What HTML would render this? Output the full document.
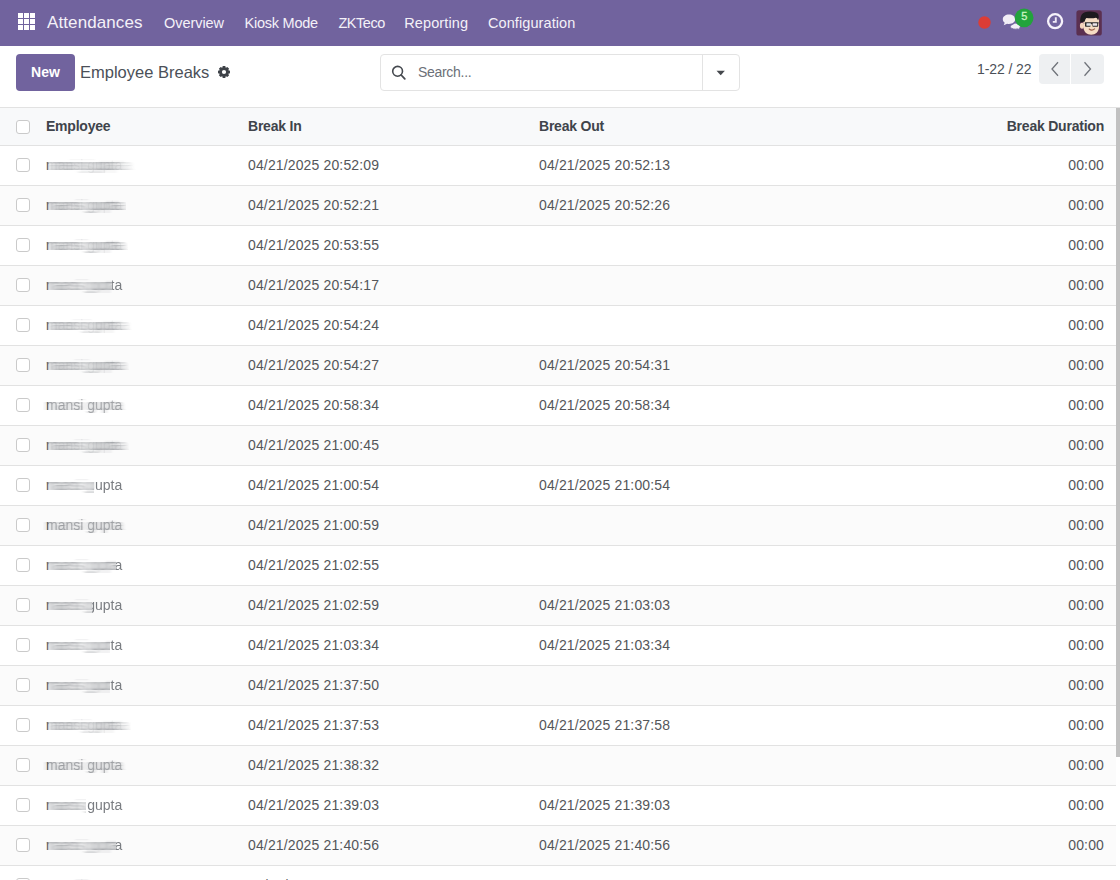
<!DOCTYPE html>
<html><head><meta charset="utf-8">
<style>
*{box-sizing:border-box;margin:0;padding:0}
html,body{width:1120px;height:880px;overflow:hidden;background:#fff;font-family:"Liberation Sans",sans-serif;color:#374151;font-size:14px}
.nav{position:absolute;left:0;top:0;width:1120px;height:46px;background:#71639e;color:#f4f1f8}
.nav .t{position:absolute;top:0;line-height:46px;white-space:nowrap}
.grid{position:absolute;left:17.8px;top:13.4px;width:17px;height:17px}
.grid i{position:absolute;width:5px;height:5px;background:#fff}
.brand{font-size:17px;left:47px;letter-spacing:.1px}
.mi{font-size:14.5px;letter-spacing:-.05px}
.cp{position:absolute;left:0;top:46px;width:1120px;height:61px;background:#fff}
.btn-new{position:absolute;left:16px;top:8px;width:59px;height:37px;background:#71639e;border-radius:4px;color:#fff;font-weight:bold;font-size:14px;line-height:37px;text-align:center}
.bc{position:absolute;left:80px;top:15px;font-size:16.5px;color:#4b5058;line-height:22px;white-space:nowrap}
.search{position:absolute;left:380px;top:8px;width:360px;height:37px;border:1px solid #e3e3e3;border-radius:4px}
.search .div{position:absolute;left:321px;top:0;width:1px;height:35px;background:#e3e3e3}
.search .ph{position:absolute;left:37px;top:0;line-height:35px;color:#6c7078;font-size:14px;letter-spacing:-.3px}
.pager{position:absolute;left:977px;top:13px;line-height:20px;font-size:14px;color:#4b5058;letter-spacing:-.1px}
.pbtn{position:absolute;top:8px;width:31px;height:30px;background:#eef0f2}
.tbl{position:absolute;left:0;top:107px;width:1116px}
.row{position:absolute;left:0;width:1116px;height:40px;border-top:1px solid #e2e2e2}
.hdr{background:#f8f9fa;height:38px;font-weight:bold;color:#40444b;letter-spacing:-.22px}
.c{position:absolute;white-space:nowrap;line-height:20px}
.d{color:#54565a;letter-spacing:.14px}
.cb{position:absolute;left:16px;width:14px;height:14px;border:1px solid #cacaca;border-radius:3px;background:#fff}
.emp{position:absolute;left:46px;top:9px;width:100px;height:20px}
.emp .bl{position:absolute;left:0;top:0;color:#85888d;white-space:nowrap;line-height:20px}
.emp .cr{position:absolute;left:0;top:0;color:#7a7d82;white-space:nowrap;line-height:20px}
.scroll{position:absolute;left:1116px;top:108px;width:4px;height:649px;background:#c1c1c1}
</style></head><body>
<svg width="0" height="0" style="position:absolute"><filter id="mb3" x="-5%" y="-20%" width="140%" height="140%" filterUnits="objectBoundingBox"><feConvolveMatrix order="7 1" kernelMatrix="1 1 1 1 1 1 1" divisor="7" targetX="3" targetY="0" edgeMode="none" preserveAlpha="false"/><feGaussianBlur stdDeviation="0.8 0.4"/><feComponentTransfer><feFuncA type="linear" slope="1.1"/></feComponentTransfer></filter><filter id="mb6" x="-5%" y="-20%" width="140%" height="140%" filterUnits="objectBoundingBox"><feConvolveMatrix order="13 1" kernelMatrix="1 1 1 1 1 1 1 1 1 1 1 1 1" divisor="13" targetX="6" targetY="0" edgeMode="none" preserveAlpha="false"/><feGaussianBlur stdDeviation="0.8 0.4"/><feComponentTransfer><feFuncA type="linear" slope="1.1"/></feComponentTransfer></filter><filter id="mb7" x="-5%" y="-20%" width="140%" height="140%" filterUnits="objectBoundingBox"><feConvolveMatrix order="15 1" kernelMatrix="1 1 1 1 1 1 1 1 1 1 1 1 1 1 1" divisor="15" targetX="7" targetY="0" edgeMode="none" preserveAlpha="false"/><feGaussianBlur stdDeviation="0.8 0.4"/><feComponentTransfer><feFuncA type="linear" slope="1.1"/></feComponentTransfer></filter><filter id="mb9" x="-5%" y="-20%" width="140%" height="140%" filterUnits="objectBoundingBox"><feConvolveMatrix order="19 1" kernelMatrix="1 1 1 1 1 1 1 1 1 1 1 1 1 1 1 1 1 1 1" divisor="19" targetX="9" targetY="0" edgeMode="none" preserveAlpha="false"/><feGaussianBlur stdDeviation="0.8 0.4"/><feComponentTransfer><feFuncA type="linear" slope="1.1"/></feComponentTransfer></filter><filter id="mb12" x="-5%" y="-20%" width="140%" height="140%" filterUnits="objectBoundingBox"><feConvolveMatrix order="25 1" kernelMatrix="1 1 1 1 1 1 1 1 1 1 1 1 1 1 1 1 1 1 1 1 1 1 1 1 1" divisor="25" targetX="12" targetY="0" edgeMode="none" preserveAlpha="false"/><feGaussianBlur stdDeviation="0.8 0.4"/><feComponentTransfer><feFuncA type="linear" slope="1.1"/></feComponentTransfer></filter></svg>
<div class="nav">
<div class="grid"><i style="left:0px;top:0px"></i><i style="left:6px;top:0px"></i><i style="left:12px;top:0px"></i><i style="left:0px;top:6px"></i><i style="left:6px;top:6px"></i><i style="left:12px;top:6px"></i><i style="left:0px;top:12px"></i><i style="left:6px;top:12px"></i><i style="left:12px;top:12px"></i></div>
<div class="t brand">Attendances</div>
<div class="t mi" style="left:164px">Overview</div>
<div class="t mi" style="left:244.6px;letter-spacing:-.25px">Kiosk Mode</div>
<div class="t mi" style="left:338.4px;letter-spacing:-.45px">ZKTeco</div>
<div class="t mi" style="left:404.3px;letter-spacing:.1px">Reporting</div>
<div class="t mi" style="left:487.9px;letter-spacing:.1px">Configuration</div>
<svg style="position:absolute;left:970px;top:0" width="150" height="46" viewBox="970 0 150 46">
 <circle cx="984.5" cy="22.5" r="6.2" fill="#dc3d36"/>
 <path d="M1009 14.6c-3.5 0-6.2 2.1-6.2 4.7 0 1.4.7 2.6 1.9 3.4l-1 2.6 3.4-1.6c.6.1 1.2.2 1.9.2 3.5 0 6.2-2.1 6.2-4.7s-2.7-4.6-6.2-4.6z" fill="#f1edf6"/>
 <path d="M1015.3 23.2c2.9 0 5.1 1.3 5.1 3.1 0 .8-.4 1.4-1 1.9l.8 1.6-2.6-.9c-.7.2-1.5.3-2.3.3-2.9 0-5.1-1.3-5.1-3" fill="#f1edf6" stroke="#71639e" stroke-width=".9"/>
 <circle cx="1024.1" cy="17.8" r="9.4" fill="#22a33c"/>
 <text x="1024.3" y="20.4" font-family="Liberation Sans" font-size="11" fill="#c9f3c2" text-anchor="middle" stroke="#c9f3c2" stroke-width=".3">5</text>
 <circle cx="1055.1" cy="21.2" r="7" fill="none" stroke="#f6f2fb" stroke-width="2.3"/>
 <path d="M1055.8 17.2v4.7h-3" fill="none" stroke="#efe9f7" stroke-width="1.9"/>
 <g transform="translate(1076.4 10.2)">
 <rect x="0" y="0" width="25.4" height="25.4" rx="2.6" fill="#5b3050"/>
 <path d="M7 9c0-2 2-3.2 6.5-3.2S22.6 7 22.6 10v6.5c0 5-3.5 8-7.8 8s-7.8-3-7.8-8z" fill="#f6dcc4"/>
 <ellipse cx="5.6" cy="15.6" rx="2.1" ry="3" fill="#f3d3bd"/>
 <path d="M4 12.6c-.5-3 0-6 1.2-8 1.5-2.3 4.5-3.2 8.5-3.2 4 0 7.2.8 8.2 2.8.6 1.4.5 3.3 0 5.5l-.4.3c-.4-1.5-1-2.3-2-2.5-2.5.6-6 .7-9.5.2-.9.8-1.4 2-1.6 3.6l-1 .2c-1 .2-2.4.4-3.4 1.1z" fill="#1d1a1e"/>
 <path d="M8.6 12h13.6v1.2h-.4v2.3c0 .7-.5 1.1-1.1 1.1h-3.6c-.7 0-1.1-.5-1.2-1.1l-.2-1.5h-1.2l-.2 1.5c-.1.6-.5 1.1-1.2 1.1h-3.4c-.7 0-1.1-.5-1.1-1.1v-2.3h-.4z" fill="#2b2a2c"/>
 <rect x="10" y="13" width="4.6" height="2.6" rx=".6" fill="#dfe2e6"/>
 <rect x="16.2" y="13" width="4.6" height="2.6" rx=".6" fill="#f0e6ec"/>
 <path d="M12.8 18.8c1.6 1.3 3.8 1.3 5.4-.2" fill="none" stroke="#9a5d48" stroke-width="1.1" stroke-linecap="round"/>
 </g>
</svg>
</div>
<div class="cp">
<div class="btn-new">New</div>
<div class="bc">Employee Breaks</div>
<svg style="position:absolute;left:217px;top:18.9px" width="14" height="14" viewBox="0 0 14 14"><path fill="#3e4248" fill-rule="evenodd" d="M5.34 2.60 L5.73 1.03 L8.27 1.03 L8.66 2.60 L8.75 2.64 L8.80 2.66 L8.85 2.68 L8.94 2.72 L10.32 1.88 L12.12 3.68 L11.28 5.06 L11.32 5.15 L11.34 5.20 L11.36 5.25 L11.40 5.34 L12.97 5.73 L12.97 8.27 L11.40 8.66 L11.36 8.75 L11.34 8.80 L11.32 8.85 L11.28 8.94 L12.12 10.32 L10.32 12.12 L8.94 11.28 L8.85 11.32 L8.80 11.34 L8.75 11.36 L8.66 11.40 L8.27 12.97 L5.73 12.97 L5.34 11.40 L5.25 11.36 L5.20 11.34 L5.15 11.32 L5.06 11.28 L3.68 12.12 L1.88 10.32 L2.72 8.94 L2.68 8.85 L2.66 8.80 L2.64 8.75 L2.60 8.66 L1.03 8.27 L1.03 5.73 L2.60 5.34 L2.64 5.25 L2.66 5.20 L2.68 5.15 L2.72 5.06 L1.88 3.68 L3.68 1.88 L5.06 2.72 L5.15 2.68 L5.20 2.66 L5.25 2.64Z M9.10 7 A2.1 2.1 0 1 0 4.90 7 A2.1 2.1 0 1 0 9.10 7Z"/></svg>
<div class="search"><div class="ph">Search...</div><div class="div"></div>
 <svg style="position:absolute;left:8.6px;top:9.4px" width="18" height="18" viewBox="0 0 18 18">
  <circle cx="7.6" cy="7.3" r="4.9" fill="none" stroke="#45494f" stroke-width="1.6"/>
  <path d="M11.2 11l3.6 3.8" stroke="#45494f" stroke-width="1.8" stroke-linecap="round"/>
 </svg>
 <svg style="position:absolute;left:335px;top:14.6px" width="10" height="6" viewBox="0 0 10 6"><path d="M0.5 0.8h8.4L4.7 5.3z" fill="#45484d"/></svg>
</div>
<div class="pager">1-22 / 22</div>
<div class="pbtn" style="left:1039px;border-radius:4px 0 0 4px"></div>
<div class="pbtn" style="left:1071px;width:32.5px;border-radius:0 4px 4px 0"></div>
<svg style="position:absolute;left:1039px;top:8px" width="65" height="30" viewBox="0 0 65 30">
 <path d="M19 8.2l-6 6.8 6 6.8" fill="none" stroke="#6f737a" stroke-width="1.3"/>
 <path d="M45.5 8.2l6 6.8-6 6.8" fill="none" stroke="#6f737a" stroke-width="1.3"/>
</svg>
</div>
<div class="tbl">
<div class="row hdr" style="top:0"><div class="cb" style="top:12px"></div><div class="c" style="left:46px;top:8px">Employee</div><div class="c" style="left:248px;top:8px">Break In</div><div class="c" style="left:539px;top:8px">Break Out</div><div class="c" style="right:12px;top:8px">Break Duration</div></div>
<div class="row" style="top:38px;background:#fff"><div class="cb" style="top:12px"></div><div class="emp"><div class="cr" style="opacity:.1">mansi gupta</div><div class="bl" style="filter:url(#mb12);clip-path:inset(-5px calc(100% - 92px) -5px 0.5px)">mansi gupta</div><div class="cr" style="clip-path:inset(-5px calc(100% - 2.6px) -5px -5px);color:#5d6066">mansi gupta</div></div><div class="c d" style="left:248px;top:9px">04/21/2025 20:52:09</div><div class="c d" style="left:539px;top:9px">04/21/2025 20:52:13</div><div class="c d" style="right:12px;top:9px">00:00</div></div>
<div class="row" style="top:78px;background:#fbfbfb"><div class="cb" style="top:12px"></div><div class="emp"><div class="cr" style="opacity:.1">mansi gupta</div><div class="bl" style="filter:url(#mb6);clip-path:inset(-5px calc(100% - 80px) -5px 0.5px)">mansi gupta</div><div class="cr" style="clip-path:inset(-5px calc(100% - 2.6px) -5px -5px);color:#5d6066">mansi gupta</div></div><div class="c d" style="left:248px;top:9px">04/21/2025 20:52:21</div><div class="c d" style="left:539px;top:9px">04/21/2025 20:52:26</div><div class="c d" style="right:12px;top:9px">00:00</div></div>
<div class="row" style="top:118px;background:#fff"><div class="cb" style="top:12px"></div><div class="emp"><div class="cr" style="opacity:.1">mansi gupta</div><div class="bl" style="filter:url(#mb6);clip-path:inset(-5px calc(100% - 82px) -5px 0.5px)">mansi gupta</div><div class="cr" style="clip-path:inset(-5px calc(100% - 2.6px) -5px -5px);color:#5d6066">mansi gupta</div></div><div class="c d" style="left:248px;top:9px">04/21/2025 20:53:55</div><div class="c d" style="right:12px;top:9px">00:00</div></div>
<div class="row" style="top:158px;background:#fbfbfb"><div class="cb" style="top:12px"></div><div class="emp"><div class="bl" style="filter:url(#mb6);clip-path:inset(-5px calc(100% - 66px) -5px 0.5px)">mansi gupta</div><div class="cr" style="clip-path:inset(-5px calc(100% - 2.6px) -5px -5px);color:#5d6066">mansi gupta</div><div class="cr" style="clip-path:inset(-5px -5px -5px 66px);filter:blur(.25px)">mansi gupta</div></div><div class="c d" style="left:248px;top:9px">04/21/2025 20:54:17</div><div class="c d" style="right:12px;top:9px">00:00</div></div>
<div class="row" style="top:198px;background:#fff"><div class="cb" style="top:12px"></div><div class="emp"><div class="cr" style="opacity:.1">mansi gupta</div><div class="bl" style="filter:url(#mb9);clip-path:inset(-5px calc(100% - 86px) -5px 0.5px)">mansi gupta</div><div class="cr" style="clip-path:inset(-5px calc(100% - 2.6px) -5px -5px);color:#5d6066">mansi gupta</div></div><div class="c d" style="left:248px;top:9px">04/21/2025 20:54:24</div><div class="c d" style="right:12px;top:9px">00:00</div></div>
<div class="row" style="top:238px;background:#fbfbfb"><div class="cb" style="top:12px"></div><div class="emp"><div class="cr" style="opacity:.1">mansi gupta</div><div class="bl" style="filter:url(#mb7);clip-path:inset(-5px calc(100% - 83px) -5px 0.5px)">mansi gupta</div><div class="cr" style="clip-path:inset(-5px calc(100% - 2.6px) -5px -5px);color:#5d6066">mansi gupta</div></div><div class="c d" style="left:248px;top:9px">04/21/2025 20:54:27</div><div class="c d" style="left:539px;top:9px">04/21/2025 20:54:31</div><div class="c d" style="right:12px;top:9px">00:00</div></div>
<div class="row" style="top:278px;background:#fff"><div class="cb" style="top:12px"></div><div class="emp"><div class="bl" style="filter:url(#mb3);opacity:.6">mansi gupta</div><div class="cr" style="opacity:.55">mansi gupta</div><div class="cr" style="clip-path:inset(-5px calc(100% - 2.6px) -5px -5px);color:#5d6066">mansi gupta</div></div><div class="c d" style="left:248px;top:9px">04/21/2025 20:58:34</div><div class="c d" style="left:539px;top:9px">04/21/2025 20:58:34</div><div class="c d" style="right:12px;top:9px">00:00</div></div>
<div class="row" style="top:318px;background:#fbfbfb"><div class="cb" style="top:12px"></div><div class="emp"><div class="cr" style="opacity:.1">mansi gupta</div><div class="bl" style="filter:url(#mb7);clip-path:inset(-5px calc(100% - 83px) -5px 0.5px)">mansi gupta</div><div class="cr" style="clip-path:inset(-5px calc(100% - 2.6px) -5px -5px);color:#5d6066">mansi gupta</div></div><div class="c d" style="left:248px;top:9px">04/21/2025 21:00:45</div><div class="c d" style="right:12px;top:9px">00:00</div></div>
<div class="row" style="top:358px;background:#fff"><div class="cb" style="top:12px"></div><div class="emp"><div class="bl" style="filter:url(#mb6);clip-path:inset(-5px calc(100% - 48px) -5px 0.5px)">mansi gupta</div><div class="cr" style="clip-path:inset(-5px calc(100% - 2.6px) -5px -5px);color:#5d6066">mansi gupta</div><div class="cr" style="clip-path:inset(-5px -5px -5px 48px);filter:blur(.25px)">mansi gupta</div></div><div class="c d" style="left:248px;top:9px">04/21/2025 21:00:54</div><div class="c d" style="left:539px;top:9px">04/21/2025 21:00:54</div><div class="c d" style="right:12px;top:9px">00:00</div></div>
<div class="row" style="top:398px;background:#fbfbfb"><div class="cb" style="top:12px"></div><div class="emp"><div class="bl" style="filter:url(#mb3);opacity:.6">mansi gupta</div><div class="cr" style="opacity:.55">mansi gupta</div><div class="cr" style="clip-path:inset(-5px calc(100% - 2.6px) -5px -5px);color:#5d6066">mansi gupta</div></div><div class="c d" style="left:248px;top:9px">04/21/2025 21:00:59</div><div class="c d" style="right:12px;top:9px">00:00</div></div>
<div class="row" style="top:438px;background:#fff"><div class="cb" style="top:12px"></div><div class="emp"><div class="bl" style="filter:url(#mb6);clip-path:inset(-5px calc(100% - 70px) -5px 0.5px)">mansi gupta</div><div class="cr" style="clip-path:inset(-5px calc(100% - 2.6px) -5px -5px);color:#5d6066">mansi gupta</div><div class="cr" style="clip-path:inset(-5px -5px -5px 70px);filter:blur(.25px)">mansi gupta</div></div><div class="c d" style="left:248px;top:9px">04/21/2025 21:02:55</div><div class="c d" style="right:12px;top:9px">00:00</div></div>
<div class="row" style="top:478px;background:#fbfbfb"><div class="cb" style="top:12px"></div><div class="emp"><div class="bl" style="filter:url(#mb6);clip-path:inset(-5px calc(100% - 46px) -5px 0.5px)">mansi gupta</div><div class="cr" style="clip-path:inset(-5px calc(100% - 2.6px) -5px -5px);color:#5d6066">mansi gupta</div><div class="cr" style="clip-path:inset(-5px -5px -5px 46px);filter:blur(.25px)">mansi gupta</div></div><div class="c d" style="left:248px;top:9px">04/21/2025 21:02:59</div><div class="c d" style="left:539px;top:9px">04/21/2025 21:03:03</div><div class="c d" style="right:12px;top:9px">00:00</div></div>
<div class="row" style="top:518px;background:#fff"><div class="cb" style="top:12px"></div><div class="emp"><div class="bl" style="filter:url(#mb6);clip-path:inset(-5px calc(100% - 64px) -5px 0.5px)">mansi gupta</div><div class="cr" style="clip-path:inset(-5px calc(100% - 2.6px) -5px -5px);color:#5d6066">mansi gupta</div><div class="cr" style="clip-path:inset(-5px -5px -5px 64px);filter:blur(.25px)">mansi gupta</div></div><div class="c d" style="left:248px;top:9px">04/21/2025 21:03:34</div><div class="c d" style="left:539px;top:9px">04/21/2025 21:03:34</div><div class="c d" style="right:12px;top:9px">00:00</div></div>
<div class="row" style="top:558px;background:#fbfbfb"><div class="cb" style="top:12px"></div><div class="emp"><div class="bl" style="filter:url(#mb6);clip-path:inset(-5px calc(100% - 64px) -5px 0.5px)">mansi gupta</div><div class="cr" style="clip-path:inset(-5px calc(100% - 2.6px) -5px -5px);color:#5d6066">mansi gupta</div><div class="cr" style="clip-path:inset(-5px -5px -5px 64px);filter:blur(.25px)">mansi gupta</div></div><div class="c d" style="left:248px;top:9px">04/21/2025 21:37:50</div><div class="c d" style="right:12px;top:9px">00:00</div></div>
<div class="row" style="top:598px;background:#fff"><div class="cb" style="top:12px"></div><div class="emp"><div class="cr" style="opacity:.1">mansi gupta</div><div class="bl" style="filter:url(#mb9);clip-path:inset(-5px calc(100% - 85px) -5px 0.5px)">mansi gupta</div><div class="cr" style="clip-path:inset(-5px calc(100% - 2.6px) -5px -5px);color:#5d6066">mansi gupta</div></div><div class="c d" style="left:248px;top:9px">04/21/2025 21:37:53</div><div class="c d" style="left:539px;top:9px">04/21/2025 21:37:58</div><div class="c d" style="right:12px;top:9px">00:00</div></div>
<div class="row" style="top:638px;background:#fbfbfb"><div class="cb" style="top:12px"></div><div class="emp"><div class="bl" style="filter:url(#mb3);opacity:.6">mansi gupta</div><div class="cr" style="opacity:.55">mansi gupta</div><div class="cr" style="clip-path:inset(-5px calc(100% - 2.6px) -5px -5px);color:#5d6066">mansi gupta</div></div><div class="c d" style="left:248px;top:9px">04/21/2025 21:38:32</div><div class="c d" style="right:12px;top:9px">00:00</div></div>
<div class="row" style="top:678px;background:#fff"><div class="cb" style="top:12px"></div><div class="emp"><div class="bl" style="filter:url(#mb6);clip-path:inset(-5px calc(100% - 40px) -5px 0.5px)">mansi gupta</div><div class="cr" style="clip-path:inset(-5px calc(100% - 2.6px) -5px -5px);color:#5d6066">mansi gupta</div><div class="cr" style="clip-path:inset(-5px -5px -5px 40px);filter:blur(.25px)">mansi gupta</div></div><div class="c d" style="left:248px;top:9px">04/21/2025 21:39:03</div><div class="c d" style="left:539px;top:9px">04/21/2025 21:39:03</div><div class="c d" style="right:12px;top:9px">00:00</div></div>
<div class="row" style="top:718px;background:#fbfbfb"><div class="cb" style="top:12px"></div><div class="emp"><div class="bl" style="filter:url(#mb6);clip-path:inset(-5px calc(100% - 70px) -5px 0.5px)">mansi gupta</div><div class="cr" style="clip-path:inset(-5px calc(100% - 2.6px) -5px -5px);color:#5d6066">mansi gupta</div><div class="cr" style="clip-path:inset(-5px -5px -5px 70px);filter:blur(.25px)">mansi gupta</div></div><div class="c d" style="left:248px;top:9px">04/21/2025 21:40:56</div><div class="c d" style="left:539px;top:9px">04/21/2025 21:40:56</div><div class="c d" style="right:12px;top:9px">00:00</div></div>
<div class="row" style="top:758px;background:#fff"><div class="cb" style="top:12px"></div><div class="emp"><div class="cr" style="opacity:.1">mansi gupta</div><div class="bl" style="filter:url(#mb6);clip-path:inset(-5px calc(100% - 80px) -5px 0.5px)">mansi gupta</div><div class="cr" style="clip-path:inset(-5px calc(100% - 2.6px) -5px -5px);color:#5d6066">mansi gupta</div></div><div class="c d" style="left:248px;top:9px">04/21/2025 21:41:10</div><div class="c d" style="right:12px;top:9px">00:00</div></div>
</div>
<div style="position:absolute;left:1116px;top:107px;width:4px;height:1px;background:#e2e2e2"></div>
<div class="scroll"></div>
</body></html>
